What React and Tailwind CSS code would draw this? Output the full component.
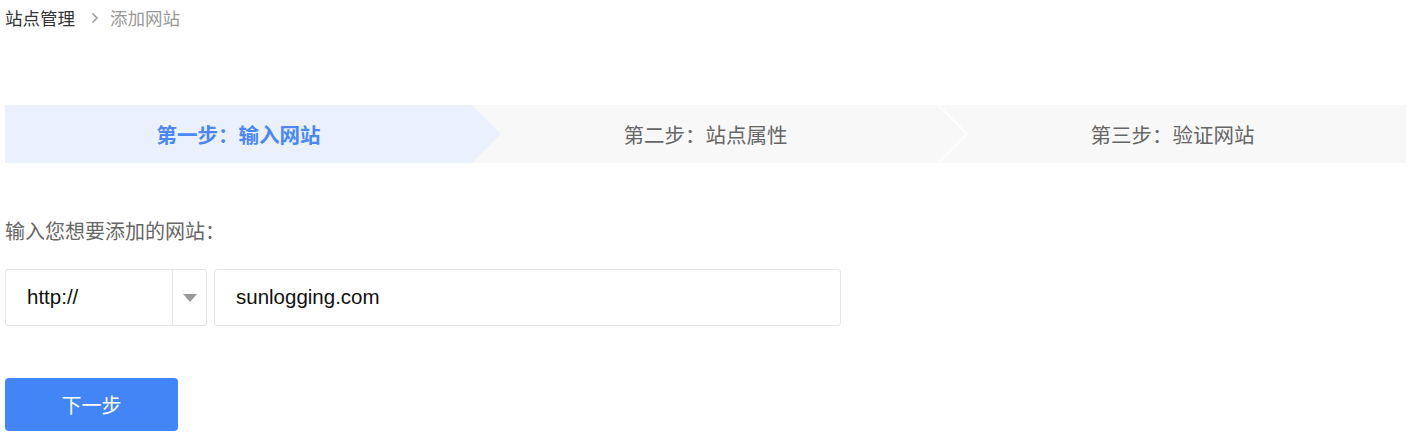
import React from "react";

const cjk = { fontFamily: '"Noto Sans CJK SC", "Noto Sans", sans-serif' };

function Step({ label, active, arrow }) {
  return (
    <div
      className={`relative flex items-center justify-center h-[58px] ${
        active ? "bg-[#eaf1fd] text-[#4a86f6] font-bold" : "bg-[#f8f8f8] text-[#666666]"
      } text-[20.5px]`}
    >
      <span className="relative z-10">{label}</span>
      {arrow === "fill" && (
        <svg
          className="absolute top-0 right-[-29px] z-20"
          width="29"
          height="58"
          viewBox="0 0 29 58"
        >
          <polygon points="0,0 29,29 0,58" fill="#eaf1fd" />
        </svg>
      )}
      {arrow === "line" && (
        <svg
          className="absolute top-0 right-[-29px] z-20"
          width="30"
          height="58"
          viewBox="0 0 30 58"
        >
          <polyline points="0,0 29,29 0,58" fill="none" stroke="#ffffff" strokeWidth="1.5" />
        </svg>
      )}
    </div>
  );
}

export default function App() {
  return (
    <div className="bg-white w-[1409px] h-[441px] px-[5px] overflow-hidden" style={cjk}>
      <div className="h-[36px] flex items-center text-[17.5px]">
        <span className="text-[#333333]">站点管理</span>
        <svg className="ml-[13px] mr-[8px]" width="14" height="14" viewBox="0 0 14 14">
          <polyline points="4.5,2.5 9,7 4.5,11.5" fill="none" stroke="#999999" strokeWidth="1.5" />
        </svg>
        <span className="text-[#999999]">添加网站</span>
      </div>

      <div className="mt-[69px] grid grid-cols-3 w-[1401px]">
        <Step label="第一步：输入网站" active arrow="fill" />
        <Step label="第二步：站点属性" arrow="line" />
        <Step label="第三步：验证网站" />
      </div>

      <div className="mt-[53px] h-[30px] flex items-center text-[20px] text-[#666666]">
        输入您想要添加的网站：
      </div>

      <div className="mt-[23px] flex gap-[7px]">
        <div className="flex w-[202px] h-[57px] border border-[#e5e5e5] rounded-[3px]">
          <div
            className="flex-1 flex items-center pl-[21px] text-[20.5px] text-[#111111]"
            style={{ fontFamily: '"Liberation Sans", Arial, sans-serif' }}
          >
            http://
          </div>
          <div className="w-[34px] border-l border-[#e5e5e5] flex items-center justify-center">
            <svg width="14" height="8" viewBox="0 0 14 8">
              <polygon points="0,0 14,0 7,8" fill="#999999" />
            </svg>
          </div>
        </div>
        <div
          className="w-[627px] h-[57px] border border-[#e5e5e5] rounded-[3px] flex items-center pl-[21px] text-[20.5px] text-[#111111]"
          style={{ fontFamily: '"Liberation Sans", Arial, sans-serif' }}
        >
          sunlogging.com
        </div>
      </div>

      <button className="mt-[52px] w-[173px] h-[53px] rounded-[4px] bg-[#4285f6] text-white text-[20px] flex items-center justify-center">
        下一步
      </button>
    </div>
  );
}
